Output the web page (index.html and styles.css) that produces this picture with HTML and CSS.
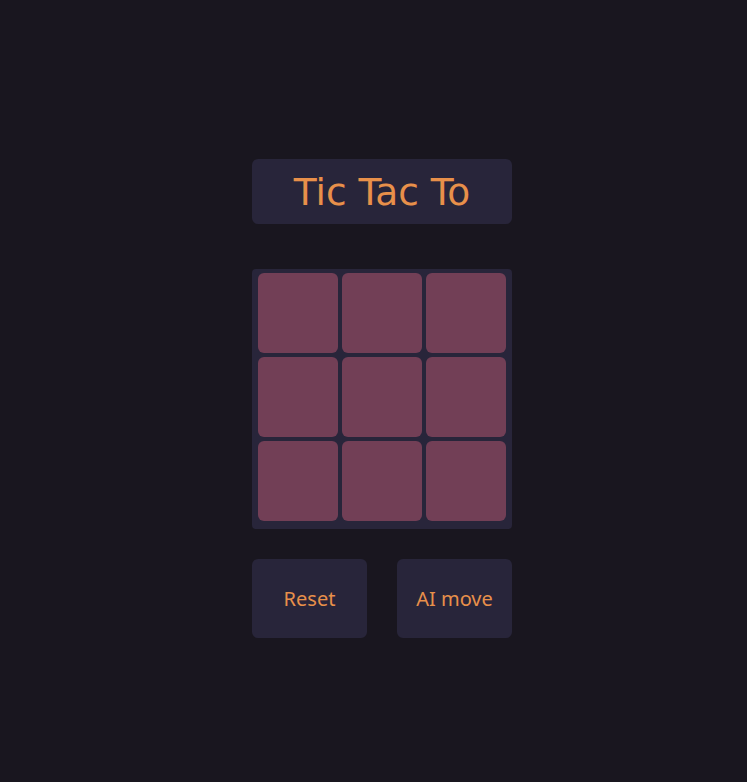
FILE: index.html
```html
<!DOCTYPE html>
<html>
<head>
<meta charset="utf-8">
<link rel="stylesheet" href="styles.css">
</head>
<body>
<main class="game">
  <h1 class="title">Tic Tac To</h1>
  <div class="board">
    <div class="cell"></div><div class="cell"></div><div class="cell"></div>
    <div class="cell"></div><div class="cell"></div><div class="cell"></div>
    <div class="cell"></div><div class="cell"></div><div class="cell"></div>
  </div>
  <div class="controls">
    <button class="btn">Reset</button>
    <button class="btn">AI move</button>
  </div>
</main>
</body>
</html>
```
FILE: styles.css
```css
html, body {
  margin: 0;
  padding: 0;
  background: #19161f;
  height: 100%;
}
.game {
  width: 260px;
  margin: 0 0 0 252px;
  padding-top: 159px;
  display: flex;
  flex-direction: column;
}
.title {
  margin: 0;
  height: 65px;
  background: #28253a;
  border-radius: 6px;
  color: #e8904a;
  font-family: "DejaVu Sans", sans-serif;
  font-weight: normal;
  font-size: 37.5px;
  display: flex;
  align-items: center;
  justify-content: center;
}
.board {
  margin-top: 45px;
  background: #28253a;
  border-radius: 4px;
  padding: 4px 6px 8px;
  display: grid;
  grid-template-columns: repeat(3, 80px);
  grid-auto-rows: 80px;
  gap: 4px;
}
.cell {
  background: #723f56;
  border-radius: 6px;
}
.controls {
  margin-top: 30px;
  display: flex;
  justify-content: space-between;
}
.btn {
  width: 115px;
  height: 79px;
  border: none;
  border-radius: 6px;
  background: #28253a;
  color: #e8904a;
  font-family: "Noto Sans", sans-serif;
  font-size: 20px;
  padding: 0;
}
```
